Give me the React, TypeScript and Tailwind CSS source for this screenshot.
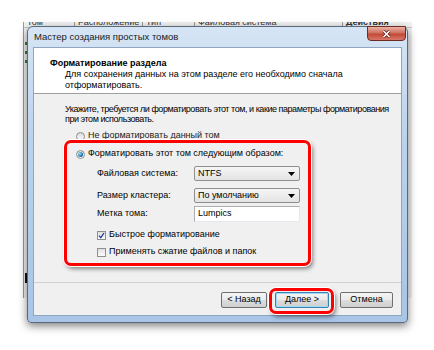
import React from 'react';

const Radio = ({ checked }: { checked?: boolean }) => (
  <span className="relative flex h-[9px] w-[9px] shrink-0 items-center justify-center rounded-full border border-[#8e8f8f] bg-[linear-gradient(#dcdcdc,#fbfbfb)]">
    {checked && (
      <span className="h-[5px] w-[5px] rounded-full bg-[radial-gradient(circle_at_35%_35%,#9fe3ff,#1a6fa8_60%,#0d4d7a)]" />
    )}
  </span>
);

const Check = ({ checked }: { checked?: boolean }) => (
  <span className="flex h-[9px] w-[9px] shrink-0 items-center justify-center border border-[#8e8f8f] bg-[linear-gradient(#e0e0e0,#fcfcfc)]">
    {checked && (
      <svg width="7" height="7" viewBox="0 0 7 7">
        <path d="M1 3.6 L2.8 5.6 L6 1" fill="none" stroke="#1b3f8f" strokeWidth="1.3" />
      </svg>
    )}
  </span>
);

const Combo = ({ value }: { value: string }) => (
  <div className="flex h-[15px] w-[106px] items-center justify-between rounded-[2px] border border-[#8f8f8f] bg-[linear-gradient(#f6f6f6,#e3e3e3)] pl-[3px] pr-[4px]">
    <span>{value}</span>
    <svg width="7" height="4" viewBox="0 0 7 4">
      <path d="M0 0 H7 L3.5 4 Z" fill="#000" />
    </svg>
  </div>
);

const Button = ({ label, w, primary }: { label: string; w: string; primary?: boolean }) => (
  <div
    className={
      'flex h-[16px] items-center justify-center rounded-[2px] border bg-[linear-gradient(#f4f4f4,#ebebeb_50%,#dddddd_51%,#cfcfcf)] ' +
      w +
      (primary ? ' border-[#3c7fb1] shadow-[inset_0_0_0_1px_#9fdcf5]' : ' border-[#707070]')
    }
  >
    {label}
  </div>
);

export default function App() {
  return (
    <div className="relative h-[350px] w-[434px] overflow-hidden bg-white font-['Liberation_Sans',Arial,sans-serif] text-[9px] text-black">
      {/* window behind */}
      <div className="absolute left-[23px] top-[22px] h-[276px] w-[389px] overflow-hidden border-l border-[#9a9a9a] bg-[#f2f2f2]">
        <div className="-mt-[5px] flex h-[11px] items-center border-b border-[#c8c8c8] text-[9px] leading-none text-[#333]">
          <span className="w-[50px] pl-[3px]">Том</span>
          <span className="w-[68px] border-l border-[#999] pl-[3px]">Расположение</span>
          <span className="w-[52px] border-l border-[#999] pl-[3px]">Тип</span>
          <span className="w-[148px] border-l border-[#999] pl-[3px]">Файловая система</span>
          <span className="border-l border-[#999] pl-[3px] font-bold">Действия</span>
        </div>
        <div className="ml-[1px] mt-[14px] h-[3px] w-[3px] bg-[#3d7a3d]" />
        <div className="ml-[1px] mt-[6px] h-[3px] w-[3px] bg-[#3d7a3d]" />
        <div className="ml-[1px] mt-[6px] h-[3px] w-[3px] bg-[#3d7a3d]" />
        <div className="ml-[1px] mt-[210px] h-[10px] w-[4px] bg-[#111]" />
      </div>

      {/* dialog */}
      <div className="absolute left-[27px] top-[26px] flex h-[297px] w-[381px] flex-col rounded-t-[6px] rounded-b-[4px] border border-[#5a6a7a] bg-[linear-gradient(180deg,#d6e5f5,#b9d1ec_40%,#a8c5e6)] px-[5px] pb-[6px] shadow-[0_3px_9px_rgba(0,0,0,0.5)]">
        <div className="relative flex h-[20px] shrink-0 items-center pl-[1px] pt-[1px] text-[9.5px] text-[#1a1a1a]">
          Мастер создания простых томов
          <div className="absolute right-[-4px] top-[-1px] flex h-[15px] w-[39px] items-center justify-center rounded-b-[4px] border border-[#6e2b22] bg-[linear-gradient(#eab3a6,#d0705f_45%,#c24a36_55%,#d8776a)]">
            <svg width="9" height="8" viewBox="0 0 9 8">
              <path d="M1.5 1 L7.5 7 M7.5 1 L1.5 7" stroke="#5a1a12" strokeWidth="3" />
              <path d="M1.5 1 L7.5 7 M7.5 1 L1.5 7" stroke="#fff" strokeWidth="1.6" />
            </svg>
          </div>
        </div>

        <div className="flex flex-1 flex-col border border-[#8fa6c0] bg-[#f0f0f0]">
          <div className="h-[45px] shrink-0 bg-white pl-[16px] pt-[9px]">
            <div className="text-[9px] font-bold leading-[12px]">Форматирование раздела</div>
            <div className="pl-[15px] leading-[11px]">
              Для сохранения данных на этом разделе его необходимо сначала
              <br />
              отформатировать.
            </div>
          </div>
          <div className="h-px shrink-0 bg-[#a0a0a0]" />

          <div className="flex flex-1 flex-col pl-[31px] pt-[10px]">
            <div className="whitespace-nowrap leading-[10px] tracking-[-0.45px]">
              Укажите, требуется ли форматировать этот том, и какие параметры форматирования
              <br />
              при этом использовать.
            </div>
            <div className="mt-[6px] flex h-[12px] items-center gap-[3px] pl-[11px]">
              <Radio />
              <span className="text-[#222]">Не форматировать данный том</span>
            </div>
            <div className="mt-[6px] flex h-[12px] items-center gap-[3px] pl-[11px]">
              <Radio checked />
              <span>Форматировать этот том следующим образом:</span>
            </div>
            <div className="mt-[6px] flex h-[15px] items-center pl-[32px]">
              <span className="w-[97px]">Файловая система:</span>
              <Combo value="NTFS" />
            </div>
            <div className="mt-[7px] flex h-[15px] items-center pl-[32px]">
              <span className="w-[97px]">Размер кластера:</span>
              <Combo value="По умолчанию" />
            </div>
            <div className="mt-[3px] flex h-[16px] items-center pl-[32px]">
              <span className="w-[97px]">Метка тома:</span>
              <div className="flex h-[16px] w-[106px] items-center border border-[#abadb3] border-r-[#e3e9ef] border-b-[#e3e9ef] bg-white pl-[3px]">
                Lumpics
              </div>
            </div>
            <div className="mt-[7px] flex h-[12px] items-center gap-[3px] pl-[32px]">
              <Check checked />
              <span>Быстрое форматирование</span>
            </div>
            <div className="mt-[5px] flex h-[12px] items-center gap-[3px] pl-[32px]">
              <Check />
              <span>Применять сжатие файлов и папок</span>
            </div>
          </div>

          <div className="h-px shrink-0 bg-[#d0d0d0]" />
          <div className="flex h-[32px] shrink-0 justify-end pr-[8px] pt-[9px]">
            <Button label="< Назад" w="w-[46px]" />
            <div className="w-[8px]" />
            <Button label="Далее >" w="w-[54px]" primary />
            <div className="w-[11px]" />
            <Button label="Отмена" w="w-[53px]" />
          </div>
        </div>
      </div>

      {/* red highlight annotations */}
      <div className="absolute left-[64px] top-[140px] h-[126px] w-[247px] rounded-[7px] border-[3px] border-[#f00] shadow-[0_0_0_1px_#fff,2px_3px_4px_rgba(0,0,0,0.45)]" />
      <div className="absolute left-[269px] top-[288px] h-[26px] w-[65px] rounded-[7px] border-[3px] border-[#f00] shadow-[0_0_0_1px_#fff,2px_3px_4px_rgba(0,0,0,0.45)]" />
    </div>
  );
}
